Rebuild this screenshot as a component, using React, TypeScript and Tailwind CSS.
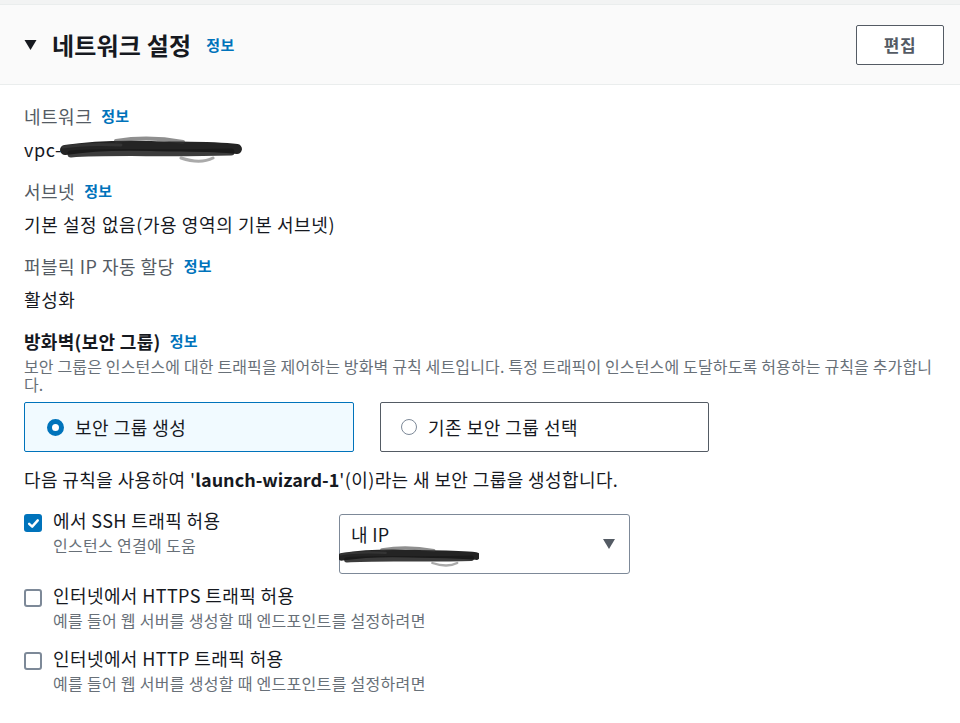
import React from 'react';

// ----------------------------------------------------------------
// Small pieces
// ----------------------------------------------------------------
function InfoLink() {
  return <a className="ml-[9px] cursor-pointer text-[15px] font-bold tracking-[0.3px] text-[#0073bb]">정보</a>;
}

function Field({ label, children }: { label: string; children: React.ReactNode }) {
  return (
    <div className="mb-[20px]">
      <div className="flex h-[22px] items-center text-[18px] tracking-[0.5px] text-[#545b64]">
        <span>{label}</span>
        <InfoLink />
      </div>
      <div className="mt-[11px] flex h-[22px] items-center text-[18px] tracking-[0.6px] text-[#16191f]">
        {children}
      </div>
    </div>
  );
}

function Scribble({ className }: { className: string }) {
  return (
    <svg className={className} viewBox="0 0 180 28" fill="none">
      <path
        d="M4 15 C30 11 60 10 90 11 C120 12 150 11 176 14"
        stroke="#111"
        strokeWidth="10"
        strokeLinecap="round"
        opacity="0.92"
      />
      <path d="M10 19 C50 16 100 19 170 17" stroke="#1a1a1a" strokeWidth="7" strokeLinecap="round" opacity="0.85" />
      <path d="M55 6 C80 2 100 3 122 7" stroke="#333" strokeWidth="4" strokeLinecap="round" opacity="0.55" />
      <path d="M120 23 C132 27 144 27 152 23" stroke="#555" strokeWidth="3" strokeLinecap="round" opacity="0.5" />
      <path d="M2 12 C20 9 40 9 60 10" stroke="#444" strokeWidth="3" strokeLinecap="round" opacity="0.5" />
    </svg>
  );
}

function Checkbox({ checked }: { checked?: boolean }) {
  return checked ? (
    <span className="mt-[6px] flex h-[18px] w-[18px] shrink-0 items-center justify-center rounded-[3px] bg-[#0073bb]">
      <svg viewBox="0 0 14 14" className="h-[13px] w-[13px]">
        <path
          d="M2.3 7.3 L5.6 10.4 L11.6 3.6"
          stroke="#fff"
          strokeWidth="2.6"
          fill="none"
          strokeLinecap="round"
          strokeLinejoin="round"
        />
      </svg>
    </span>
  ) : (
    <span className="mt-[6px] h-[18px] w-[18px] shrink-0 rounded-[3px] border-2 border-[#7d8998] bg-white" />
  );
}

function RuleRow({
  checked,
  title,
  hint,
  children,
  className = '',
}: {
  checked?: boolean;
  title: React.ReactNode;
  hint: string;
  children?: React.ReactNode;
  className?: string;
}) {
  return (
    <div className={`flex items-start ${className}`}>
      <div className="flex min-w-[315px] gap-[11px]">
        <Checkbox checked={checked} />
        <div>
          <div className="text-[18px] leading-[24px] tracking-[0.4px] text-[#16191f]">{title}</div>
          <div className="mt-[2px] text-[16px] leading-[22px] tracking-[0.3px] text-[#687078]">{hint}</div>
        </div>
      </div>
      {children}
    </div>
  );
}

// ----------------------------------------------------------------
// Page
// ----------------------------------------------------------------
export default function App() {
  return (
    <div
      className="h-[723px] w-[960px] overflow-hidden bg-white"
      style={{ fontFamily: '"Noto Sans CJK KR", "Noto Sans", sans-serif' }}
    >
      <div className="h-[4px] bg-[#f2f3f3]" />

      {/* Header */}
      <div className="flex h-[81px] items-center justify-between border-y border-[#eaeded] bg-[#fafafa] pl-[24px] pr-[16px]">
        <div className="flex items-center">
          <svg viewBox="0 0 12 10" className="mr-[15px] h-[10px] w-[13px]">
            <path d="M0 0 H12 L6 10 Z" fill="#16191f" />
          </svg>
          <h2 className="text-[24px] font-bold leading-[28px] tracking-[0.2px] text-[#16191f]">네트워크 설정</h2>
          <a className="ml-[15px] mt-[2px] text-[15px] font-bold tracking-[0.3px] text-[#0073bb]">정보</a>
        </div>
        <button className="h-[40px] w-[88px] rounded-[2px] border border-[#545b64] bg-white text-[17px] font-bold tracking-[0.5px] text-[#545b64]">
          편집
        </button>
      </div>

      {/* Body */}
      <div className="px-[24px] pt-[20px]">
        <Field label="네트워크">
          <span>vpc-</span>
          <Scribble className="-ml-[4px] h-[28px] w-[186px] shrink-0" />
        </Field>
        <Field label="서브넷">기본 설정 없음(가용 영역의 기본 서브넷)</Field>
        <Field label="퍼블릭 IP 자동 할당">활성화</Field>

        {/* Firewall */}
        <div>
          <div className="flex h-[22px] items-center text-[18px] font-bold tracking-[0.3px] text-[#16191f]">
            <span>방화벽(보안 그룹)</span>
            <InfoLink />
          </div>
          <p className="mt-[5px] text-[16px] leading-[18px] tracking-[0.15px] text-[#687078]">
            보안 그룹은 인스턴스에 대한 트래픽을 제어하는 방화벽 규칙 세트입니다. 특정 트래픽이 인스턴스에 도달하도록 허용하는 규칙을 추가합니다.
          </p>

          <div className="mt-[9px] flex gap-[26px]">
            <div className="flex h-[50px] w-[330px] items-center gap-[11px] rounded-[2px] border border-[#0073bb] bg-[#f1faff] pl-[22px]">
              <span className="h-[17px] w-[17px] rounded-full border-[5px] border-[#0073bb] bg-white" />
              <span className="text-[18px] tracking-[0.5px] text-[#16191f]">보안 그룹 생성</span>
            </div>
            <div className="flex h-[50px] w-[329px] items-center gap-[11px] rounded-[2px] border border-[#545b64] bg-white pl-[20px]">
              <span className="h-[16px] w-[16px] rounded-full border-[1.5px] border-[#7d8998] bg-white" />
              <span className="text-[18px] tracking-[0.5px] text-[#16191f]">기존 보안 그룹 선택</span>
            </div>
          </div>

          <p className="mt-[16px] text-[18px] leading-[22px] tracking-[0.4px] text-[#16191f]">
            다음 규칙을 사용하여 '<span className="font-bold tracking-normal">launch-wizard-1</span>'(이)라는 새 보안 그룹을
            생성합니다.
          </p>
        </div>

        {/* Rules */}
        <RuleRow checked title="에서 SSH 트래픽 허용" hint="인스턴스 연결에 도움" className="mt-[18px]">
          <div className="mt-[6px] flex h-[60px] w-[291px] items-center justify-between rounded-[3px] border border-[#7d8998] bg-white pl-[11px] pr-[14px]">
            <div className="pt-[2px]">
              <div className="text-[18px] leading-[22px] tracking-[0.3px] text-[#16191f]">내 IP</div>
              <Scribble className="-ml-[12px] h-[22px] w-[140px]" />
            </div>
            <svg viewBox="0 0 12 10" className="h-[10px] w-[12px]">
              <path d="M0 0 H12 L6 10 Z" fill="#545b64" />
            </svg>
          </div>
        </RuleRow>
        <RuleRow
          title="인터넷에서 HTTPS 트래픽 허용"
          hint="예를 들어 웹 서버를 생성할 때 엔드포인트를 설정하려면"
          className="mt-[9px]"
        />
        <RuleRow
          title="인터넷에서 HTTP 트래픽 허용"
          hint="예를 들어 웹 서버를 생성할 때 엔드포인트를 설정하려면"
          className="mt-[15px]"
        />
      </div>
    </div>
  );
}
